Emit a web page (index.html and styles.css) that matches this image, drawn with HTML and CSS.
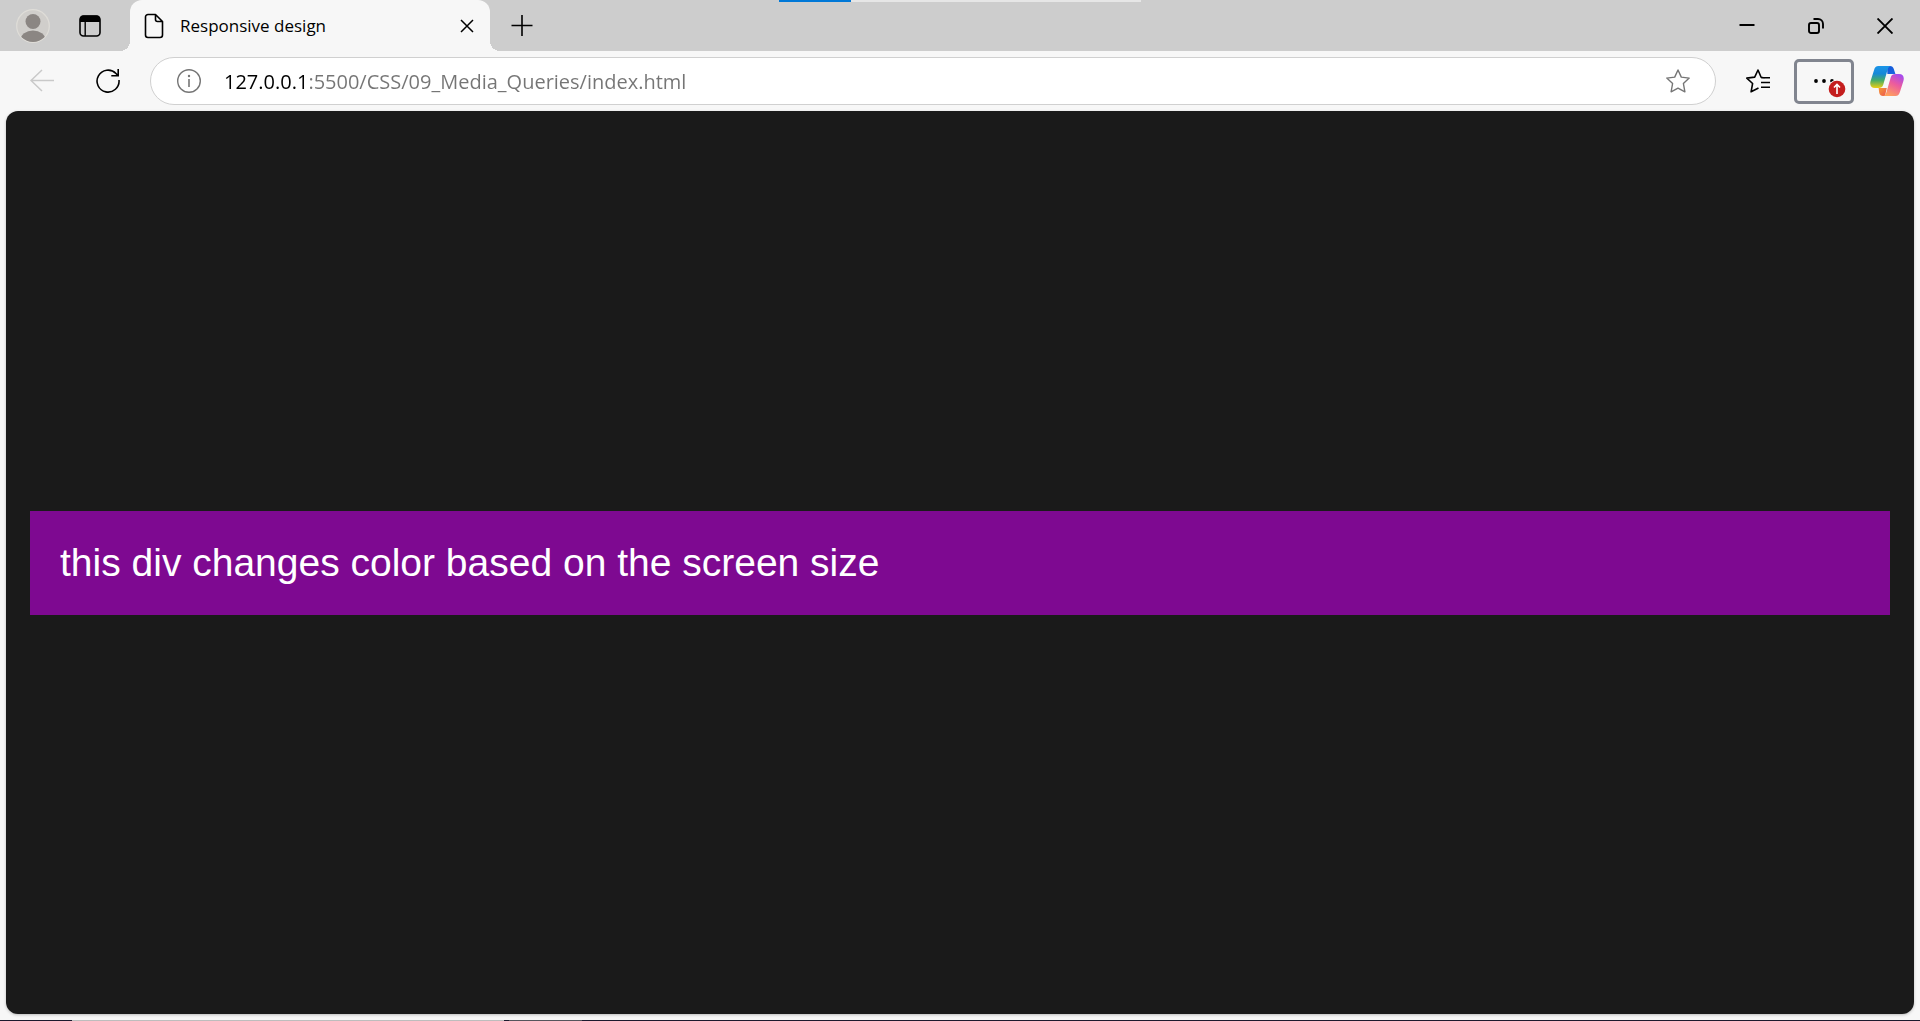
FILE: index.html
```
<!DOCTYPE html>
<html lang="en">
<head>
<meta charset="utf-8">
<meta name="viewport" content="width=device-width, initial-scale=1">
<title>Responsive design</title>
<link rel="stylesheet" href="styles.css">
</head>
<body>
<div class="browser">
  <header class="titlebar">
    <button class="icon-btn avatar" aria-label="Profile">
      <svg width="34" height="34" viewBox="0 0 34 34"><defs><clipPath id="disc"><circle cx="17" cy="17" r="16"/></clipPath></defs><circle cx="17" cy="17" r="16.3" fill="#d0cecb" stroke="#dfddd8" stroke-width="1.2"/><g fill="#8b8683" clip-path="url(#disc)"><circle cx="17" cy="12.500" r="7.500"/><ellipse cx="17" cy="31" rx="12.500" ry="9.500"/></g></svg>
    </button>
    <button class="icon-btn" aria-label="Tab actions">
      <svg width="24" height="24" viewBox="0 0 24 24"><rect x="2" y="2" width="20" height="20" rx="3.500" fill="none" stroke="#000" stroke-width="1.6"/><path d="M2 8V5a3.500 3.500 0 0 1 3.500-3.500h13A3.500 3.500 0 0 1 22 5v3z"/><path d="M7.200 8v14" stroke="#000" stroke-width="1.4"/></svg>
    </button>
    <div class="tab">
      <svg width="20" height="26" viewBox="0 0 20 26" fill="none" stroke="#000" stroke-width="1.6" stroke-linejoin="round"><path d="M4 1.500h7.500L18.500 8.500V22a2.500 2.500 0 0 1-2.500 2.500H4A2.500 2.500 0 0 1 1.500 22V4A2.500 2.500 0 0 1 4 1.500zM11.500 1.500V6.500a2 2 0 0 0 2 2h5"/></svg>
      <span class="tab-title">Responsive design</span>
      <button class="icon-btn" aria-label="Close tab">
        <svg width="14" height="14" viewBox="0 0 14 14" stroke="#000" stroke-width="1.500"><path d="M1 1l12 12M13 1L1 13"/></svg>
      </button>
    </div>
    <button class="icon-btn new-tab" aria-label="New tab">
      <svg width="22" height="22" viewBox="0 0 22 22" stroke="#000" stroke-width="1.600"><path d="M11 0v21M.5 10.500h21"/></svg>
    </button>
    <div class="window-controls">
      <button class="icon-btn" aria-label="Minimize"><svg width="16" height="16" viewBox="0 0 16 16"><path d="M.5 7h15" stroke="#000" stroke-width="2"/></svg></button>
      <button class="icon-btn" aria-label="Restore"><svg width="16" height="16" viewBox="0 0 16 16" fill="none" stroke="#000" stroke-width="1.900"><rect x="1" y="5" width="10" height="10" rx="2"/><path d="M5.500 1h4.500a5 5 0 0 1 5 5v4.500"/></svg></button>
      <button class="icon-btn" aria-label="Close"><svg width="16" height="16" viewBox="0 0 16 16" stroke="#000" stroke-width="1.900"><path d="M.5.5l15 15M15.500.5l-15 15"/></svg></button>
    </div>
    <div class="progress"><div class="progress-done"></div></div>
  </header>

  <nav class="toolbar">
    <button class="icon-btn" aria-label="Back">
      <svg width="24" height="24" viewBox="0 0 24 24" fill="none" stroke="#c9c9c9" stroke-width="1.500"><path d="M24 11.500H1M12 1L1 11.500 12 22"/></svg>
    </button>
    <button class="icon-btn reload" aria-label="Reload">
      <svg width="24" height="24" viewBox="0 0 24 24" fill="none" stroke="#000" stroke-width="1.600"><path d="M23 11a11 11 0 1 1-3-6.500l2 2.300M22.200 0v6.800h-6.900"/></svg>
    </button>
    <div class="address">
      <button class="icon-btn" aria-label="Site information">
        <svg width="24" height="24" viewBox="0 0 24 24"><circle cx="12" cy="12" r="11.300" fill="none" stroke="#757575" stroke-width="1.400"/><path d="M12 10v8" stroke="#757575" stroke-width="1.600"/><circle cx="12" cy="7" r="1.200" fill="#757575"/></svg>
      </button>
      <input class="url" type="text" aria-label="Address" value="127.0.0.1:5500/CSS/09_Media_Queries/index.html">
      <button class="icon-btn" aria-label="Add to favorites">
        <svg width="24" height="24" viewBox="0 0 24 24" fill="none" stroke="#757575" stroke-width="1.400" stroke-linejoin="round"><path d="M12 1l3.300 7.100 7.900 1-5.800 5.400 1.500 8.300L12 19.200 5.100 22.800l1.500-8.300L.8 9.100l7.900-1z"/></svg>
      </button>
    </div>
    <button class="icon-btn" aria-label="Favorites">
      <svg width="24" height="24" viewBox="0 0 24 24" fill="none" stroke="#000" stroke-width="1.600" stroke-linejoin="round"><path d="M18.500 9l-3.400-.8L12 1 8.700 8.100l-7.900 1 5.800 5.400-1.500 8.300L12.500 19M15 8.800h9M15 13.500h9M15 18.200h9"/></svg>
    </button>
    <button class="icon-btn menu" aria-label="Settings and more, update available">
      <svg width="54" height="39" viewBox="0 0 54 39"><g><circle cx="19" cy="19" r="1.900"/><circle cx="27" cy="19" r="1.900"/><circle cx="35" cy="19" r="1.900"/></g><circle cx="40" cy="27" r="9.300" fill="#f7f7f7"/><circle cx="40" cy="27" r="8.300" fill="#c41e1e"/><path d="M40 32v-9.500M37 25.500l3-3 3 3" fill="none" stroke="#fff" stroke-width="1.600"/></svg>
    </button>
    <button class="icon-btn" aria-label="Copilot">
      <svg width="34" height="30" viewBox="0 0 34 30">
        <defs>
          <linearGradient id="cp-blue" x1="0" y1="0" x2="0" y2="1"><stop offset="0" stop-color="#1b95e8"/><stop offset=".35" stop-color="#1689d8"/><stop offset=".65" stop-color="#45ac68"/><stop offset="1" stop-color="#edce11"/></linearGradient>
          <linearGradient id="cp-pink" x1=".8" y1="0" x2=".3" y2="1"><stop offset="0" stop-color="#a34af0"/><stop offset=".45" stop-color="#ec5b9e"/><stop offset="1" stop-color="#ffa25c"/></linearGradient>
          <linearGradient id="cp-navy" x1="0" y1="0" x2="1" y2="1"><stop offset="0" stop-color="#1555d8"/><stop offset="1" stop-color="#1769e0"/></linearGradient>
          <linearGradient id="cp-red" x1="0" y1="0" x2="1" y2="1"><stop offset="0" stop-color="#f59b35"/><stop offset="1" stop-color="#ec5452"/></linearGradient>
        </defs>
        <path d="M17 0h3c2 0 3.200 1 3.800 3l1.600 5h-8z" fill="url(#cp-navy)"/>
        <path d="M8.600 22h8.200L15 30h-2c-2 0-3.200-1.200-3.700-3z" fill="url(#cp-red)"/>
        <path d="M8.500 0h13c-2.500 0-3.300 1.700-4 4l-4.200 14.500C12.500 21.200 11 22 8.500 22H5C.8 22-.5 18.800.6 15L4 4.200C4.800 1.400 6 0 8.500 0z" fill="url(#cp-blue)"/>
        <path d="M25.500 8H29c4.200 0 5.500 3.200 4.400 7L30 25.800c-.8 2.800-2 4.200-4.500 4.200h-13c2.500 0 3.300-1.700 4-4l4.200-14.500C21.500 8.800 23 8 25.500 8z" fill="url(#cp-pink)"/>
      </svg>
    </button>
  </nav>

  <main class="page">
    <div class="box">this div changes color based on the screen size</div>
  </main>
  <div class="desktop-edge"></div>
</div>
</body>
</html>
```
FILE: styles.css
```
* {
  box-sizing: border-box;
}

body {
  margin: 0;
  background: #f7f7f7;
  color: #000;
  font-family: "Open Sans", "Noto Sans", sans-serif;
}

.browser {
  display: flex;
  flex-direction: column;
  min-height: 100vh;
}

.icon-btn {
  display: flex;
  flex: none;
  align-items: center;
  justify-content: center;
  margin: 0;
  padding: 0;
  border: 0;
  background: none;
}

/* Title bar */
.titlebar {
  position: relative;
  display: flex;
  align-items: center;
  height: 51px;
  padding: 0 27px 0 16px;
  background: #cdcdcd;
}

.avatar {
  margin-right: 28px;
}

.tab {
  position: relative;
  display: flex;
  align-items: center;
  align-self: stretch;
  width: 360px;
  margin-left: 28px;
  padding: 0 16px 0 14px;
  border-radius: 12px 12px 0 0;
  background: #f7f7f7;
}

/* Outward curves at the foot of the active tab */
.tab::before,
.tab::after {
  content: "";
  position: absolute;
  bottom: 0;
  width: 10px;
  height: 10px;
}

.tab::before {
  right: 100%;
  background: radial-gradient(circle at 0 0, #cdcdcd 10px, #f7f7f7 10px);
}

.tab::after {
  left: 100%;
  background: radial-gradient(circle at 100% 0, #cdcdcd 10px, #f7f7f7 10px);
}

.tab-title {
  flex: 1;
  padding-left: 16px;
  font-size: 17px;
  line-height: 24px;
  white-space: nowrap;
}

.new-tab {
  margin-left: 21px;
}

.window-controls {
  display: flex;
  gap: 53px;
  margin-left: auto;
}

.progress {
  position: absolute;
  top: 0;
  left: 50%;
  width: 362px;
  height: 2px;
  transform: translateX(-50%);
  background: #e6e6e6;
}

.progress-done {
  width: 20%;
  height: 100%;
  background: #0078d7;
}

/* Toolbar */
.toolbar {
  display: flex;
  align-items: center;
  height: 60px;
  padding: 0 16px 0 30px;
}

.reload {
  margin-left: 42px;
}

.address {
  display: flex;
  flex: 1;
  align-items: center;
  height: 48px;
  margin: 0 30px;
  padding: 0 25px 0 26px;
  border: 1px solid #d0d0d0;
  border-radius: 24px;
  background: #fff;
}

.url {
  flex: 1;
  min-width: 0;
  height: 32px;
  margin: 0 24px 0 23px;
  padding: 0;
  border: 0;
  outline: 0;
  background: linear-gradient(90deg, #000 81px, #757575 81px);
  background-clip: text;
  color: transparent;
  font-family: inherit;
  font-size: 20px;
}

.menu {
  width: 60px;
  height: 45px;
  margin: 0 16px 0 24px;
  border: 3px solid #81858f;
  border-radius: 5px;
}

/* Rendered page */
.page {
  display: flex;
  flex: 1;
  align-items: center;
  margin: 0 6px 6px;
  padding: 0 24px;
  border-radius: 12px;
  background: #1a1a1a;
  box-shadow: 0 1px 3px #bbb;
}

.box {
  flex: 1;
  padding: 30px;
  background: #7e0991;
  color: #fff;
  font-family: "Liberation Sans", Arial, sans-serif;
  font-size: 39px;
  line-height: 44px;
}

/* Sliver of the desktop below the window */
.desktop-edge {
  height: 1px;
  background: linear-gradient(90deg, #1c1a2e 72px, #bdbdbd 72px 504px, #1c1a2e 504px 509px, #55555c 509px 582px, #1c1a2e 582px);
}
```
